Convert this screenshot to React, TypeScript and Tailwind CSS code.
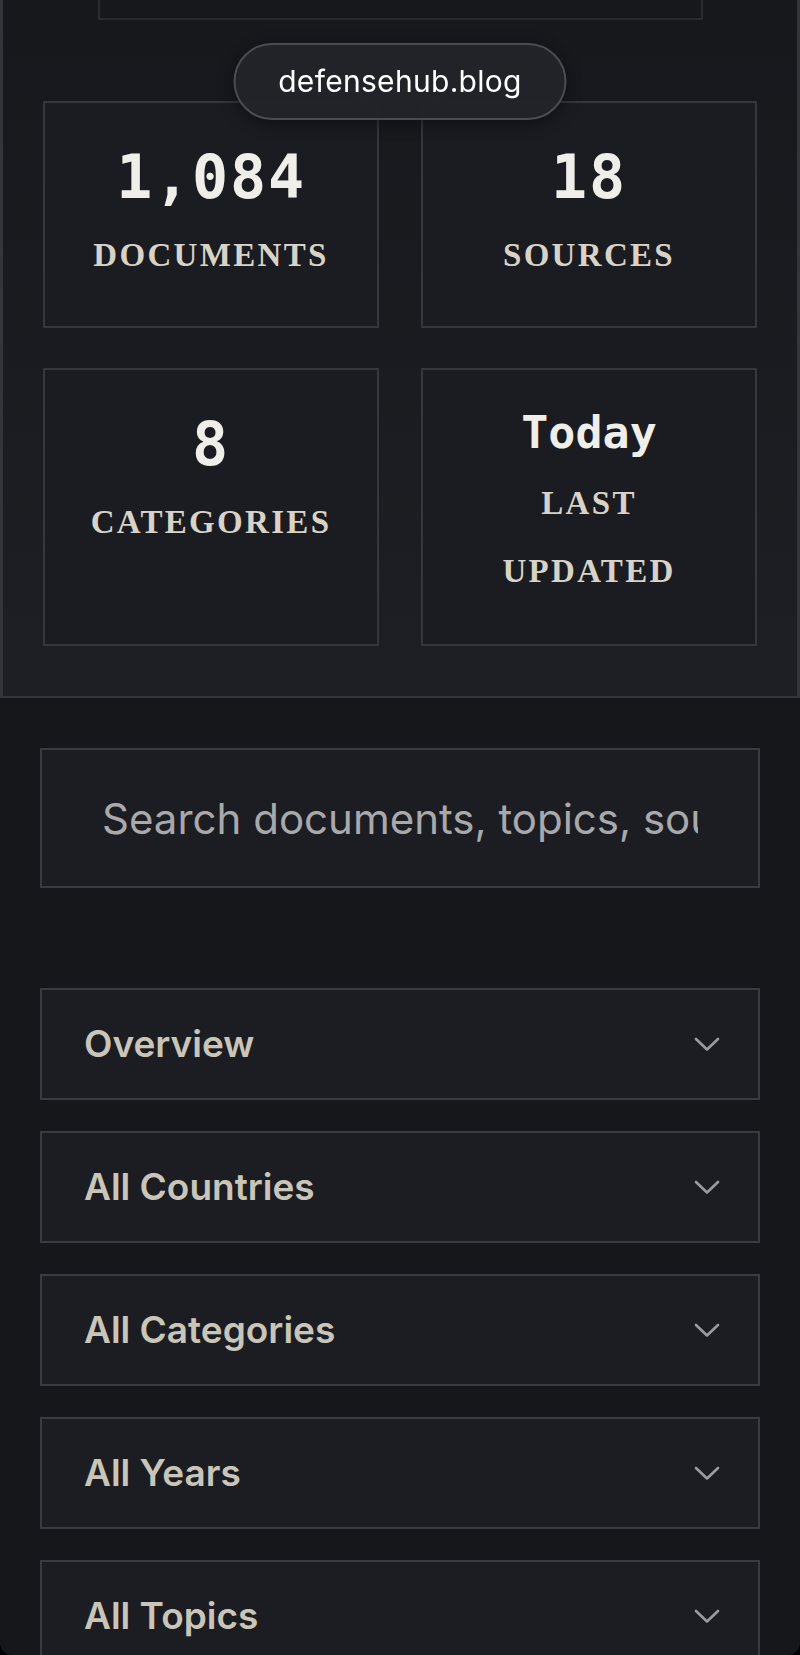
import React from "react";

const sans = "font-['Inter','Noto_Sans',sans-serif]";
const mono = "font-['DejaVu_Sans_Mono','Liberation_Mono',monospace]";
const serif = "font-['Liberation_Serif','DejaVu_Serif',serif]";

type Stat = { value: string; label: string; small?: boolean };

const stats: Stat[] = [
  { value: "1,084", label: "Documents" },
  { value: "18", label: "Sources" },
  { value: "8", label: "Categories" },
  { value: "Today", label: "Last Updated", small: true },
];

const filters = ["Overview", "All Countries", "All Categories", "All Years", "All Topics"];

function Chevron() {
  return (
    <svg width="26" height="15" viewBox="0 0 26 15" fill="none" className="shrink-0">
      <polyline
        points="2,2 13,12.5 24,2"
        stroke="#9b9ba3"
        strokeWidth="2.6"
        strokeLinecap="round"
        strokeLinejoin="round"
      />
    </svg>
  );
}

function StatCard({ value, label, small }: Stat) {
  return (
    <div className="flex flex-col items-center border-2 border-[#36373c] bg-[#1b1c21] px-[40px] pt-[44px] pb-[37px] text-center">
      <div
        className={`${mono} font-bold leading-none text-[#efeee9] ${
          small ? "-mt-[4px] text-[45px]" : "text-[60px] tracking-[0.03em]"
        }`}
      >
        {value}
      </div>
      <div
        className={`${serif} mt-[14px] text-[33px] font-bold uppercase leading-[68px] tracking-[0.07em] text-[#d8d3c6] ${
          small ? "mb-[2px]" : ""
        }`}
      >
        {label}
      </div>
    </div>
  );
}

export default function App() {
  return (
    <div className="h-[1655px] w-[800px] bg-black">
      <div className="relative h-full overflow-hidden rounded-b-[12px] bg-[#16171b]">
        {/* stats panel */}
        <section className="border-x-[3px] border-b-2 border-[#34353a] bg-linear-to-b from-[#17181c] to-[#1e1f24] px-[40px] pb-[50px]">
          <div className="mx-auto h-[20px] w-[605px] border-x-2 border-b-2 border-[#2a2b30]" />
          <div className="mt-[81px] grid grid-cols-2 gap-x-[42px] gap-y-[40px]">
            {stats.map((s) => (
              <StatCard key={s.label} {...s} />
            ))}
          </div>
        </section>

        {/* search and filters */}
        <div className="px-[40px] pt-[50px]">
          <div className="flex h-[140px] items-center border-2 border-[#3a3b41] bg-[#1c1d22] px-[60px]">
            <input
              type="text"
              placeholder="Search documents, topics, sources..."
              className={`${sans} w-full bg-transparent text-[42px] text-[#e5e5e5] outline-none placeholder:text-[#a9a9ab]`}
            />
          </div>

          <div className="mt-[100px] flex flex-col gap-[31px]">
            {filters.map((f) => (
              <div
                key={f}
                className="flex h-[112px] shrink-0 items-center justify-between border-2 border-[#3a3b41] bg-[#1c1d22] pl-[42px] pr-[38px]"
              >
                <span className={`${sans} text-[37px] font-semibold text-[#c9c5b8]`}>{f}</span>
                <Chevron />
              </div>
            ))}
          </div>
        </div>

        {/* address pill */}
        <div
          className={`${sans} absolute left-1/2 top-[43px] flex h-[77px] w-[333px] -translate-x-1/2 items-center justify-center rounded-full border-2 border-[#4b4c53] bg-[#24252a]/90 text-[30px] tracking-[0.01em] text-white shadow-[0_4px_16px_rgba(0,0,0,0.45)] backdrop-blur-md`}
        >
          defensehub.blog
        </div>
      </div>
    </div>
  );
}
